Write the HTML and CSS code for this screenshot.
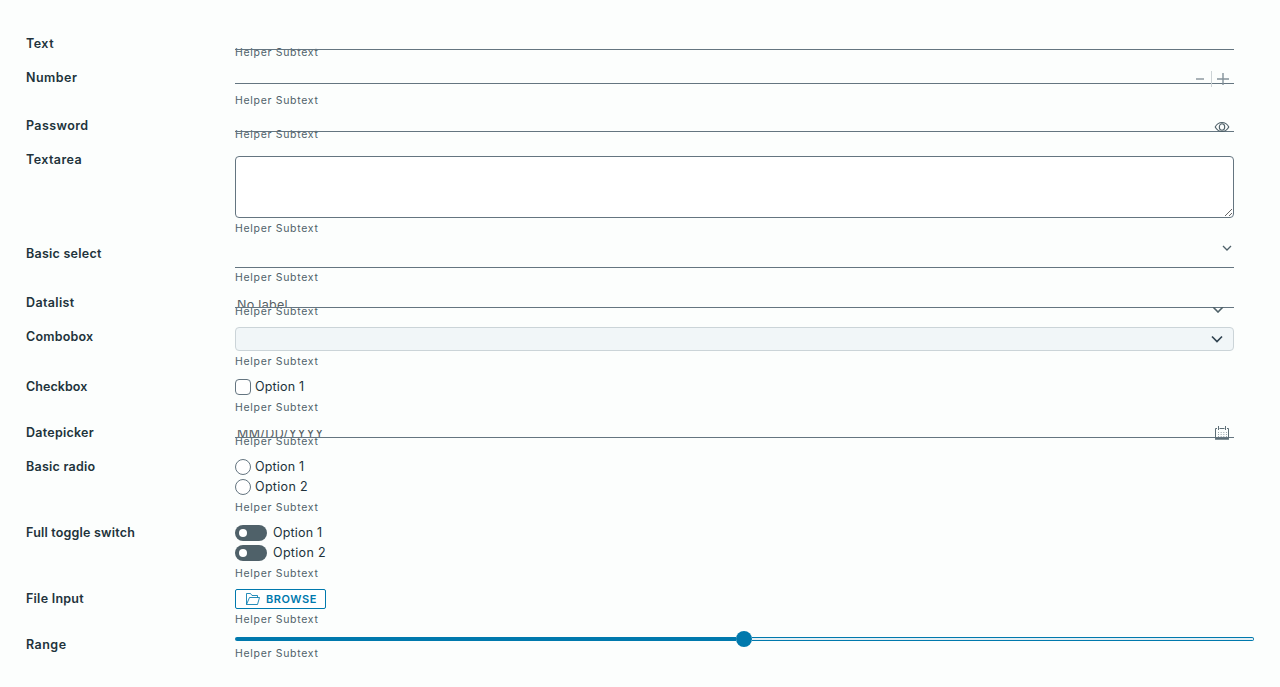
FILE: index.html
```html
<!DOCTYPE html>
<html lang="en">
<head>
<meta charset="utf-8">
<title>Form controls</title>
<link rel="stylesheet" href="styles.css">
</head>
<body>
<form class="form">
  <div class="row row-compact">
    <span class="label l-text">Text</span>
    <div class="field"><div class="line"></div><span class="helper">Helper Subtext</span></div>
  </div>
  <div class="row row-number">
    <span class="label l-number">Number</span>
    <div class="field">
      <div class="line line-number">
        <svg class="icon stepper" width="36" height="16" viewBox="0 0 36 16"><path d="M2 8h8" stroke="#9aa5aa" stroke-width="1.700"/><path d="M17.500 0v16" stroke="#ccd3d6"/><path d="M23 8h12M29 2v12" stroke="#84929a" stroke-width="1.400"/></svg>
      </div>
      <span class="helper">Helper Subtext</span>
    </div>
  </div>
  <div class="row row-compact">
    <span class="label l-password">Password</span>
    <div class="field">
      <div class="line">
        <svg class="icon eye" width="16" height="12" viewBox="0 0 16 12" fill="none" stroke="#4f6169" stroke-width="1.100"><path d="M1.200 6C2.700 3.200 5 1.500 8 1.500S13.300 3.200 14.800 6C13.300 8.800 11 10.500 8 10.500S2.700 8.800 1.200 6z"/><ellipse cx="8" cy="6" rx="2.700" ry="3.200"/></svg>
      </div>
      <span class="helper">Helper Subtext</span>
    </div>
  </div>
  <div class="row row-area">
    <span class="label l-textarea">Textarea</span>
    <div class="field"><textarea class="area"></textarea><span class="helper">Helper Subtext</span></div>
  </div>
  <div class="row row-select">
    <span class="label l-select">Basic select</span>
    <div class="field">
      <div class="line line-select">
        <svg class="icon select-chevron" width="10" height="8" viewBox="0 0 10 8" fill="none" stroke="#4f6169" stroke-width="1.300"><path d="M1 2l4 4 4-4"/></svg>
      </div>
      <span class="helper">Helper Subtext</span>
    </div>
  </div>
  <div class="row row-compact">
    <span class="label l-datalist">Datalist</span>
    <div class="field">
      <div class="line line-hint"><div class="clip"><span class="hint hint-label">No label</span></div>
        <svg class="icon list-chevron" width="12" height="6" viewBox="0 0 12 6" fill="none" stroke="#4f6169" stroke-width="1.600"><path d="M1 0L6 5 11 0"/></svg>
      </div>
      <span class="helper">Helper Subtext</span>
    </div>
  </div>
  <div class="row row-combo">
    <span class="label l-combo">Combobox</span>
    <div class="field">
      <div class="combo"><svg width="12" height="8" viewBox="0 0 12 8" fill="none" stroke="#314351" stroke-width="1.700"><path d="M1 1.500l5 5 5-5"/></svg></div>
      <span class="helper">Helper Subtext</span>
    </div>
  </div>
  <div class="row row-check">
    <span class="label l-check">Checkbox</span>
    <div class="field">
      <div class="choices"><label class="choice"><span class="box"></span><span class="option opt1">Option 1</span></label></div>
      <span class="helper">Helper Subtext</span>
    </div>
  </div>
  <div class="row row-compact">
    <span class="label l-date">Datepicker</span>
    <div class="field">
      <div class="line line-hint"><div class="clip"><span class="hint hint-date">MM/DD/YYYY</span></div>
        <svg class="icon calendar" width="16" height="14" viewBox="0 0 16 14" fill="none" stroke="#5d6e76"><path d="M3 2.500H1.500v10h13v-10H13M5.500 2.500h5"/><path d="M1 13h14" stroke-width="1.500"/><path d="M4.500 0v4M11.500 0v4"/><path d="M4 6.500h9M4 8.500h9M4 10.500h9" stroke="#9aa5aa" stroke-dasharray="1 1.660"/></svg>
      </div>
      <span class="helper">Helper Subtext</span>
    </div>
  </div>
  <div class="row row-options">
    <span class="label l-radio">Basic radio</span>
    <div class="field">
      <div class="choices">
        <label class="choice"><span class="box radio"></span><span class="option opt1">Option 1</span></label>
        <label class="choice"><span class="box radio"></span><span class="option opt2">Option 2</span></label>
      </div>
      <span class="helper">Helper Subtext</span>
    </div>
  </div>
  <div class="row row-options">
    <span class="label l-toggle">Full toggle switch</span>
    <div class="field">
      <div class="choices">
        <label class="choice toggle"><span class="switch"></span><span class="option opt1">Option 1</span></label>
        <label class="choice toggle"><span class="switch"></span><span class="option opt2">Option 2</span></label>
      </div>
      <span class="helper">Helper Subtext</span>
    </div>
  </div>
  <div class="row row-check">
    <span class="label l-file">File Input</span>
    <div class="field">
      <button class="browse" type="button"><svg width="16" height="14" viewBox="0 0 16 14" fill="none" stroke="#0079ad" stroke-width=".85"><path d="M1.500 12.500v-11h4l1.500 2h5.500v2M1.500 12.500l3-7h10l-2 7z"/></svg><span class="browse-text">BROWSE</span></button>
      <span class="helper">Helper Subtext</span>
    </div>
  </div>
  <div class="row row-compact">
    <span class="label l-range">Range</span>
    <div class="field">
      <div class="range"><span class="fill"></span><span class="thumb"></span><span class="rest"></span></div>
      <span class="helper">Helper Subtext</span>
    </div>
  </div>
</form>
</body>
</html>
```

FILE: styles.css
```css
* { box-sizing: border-box; }
body { margin: 0; background: #fcfefd; color: #21333b; font-family: Inter, "Open Sans", sans-serif; font-size: 12.5px; }
.form { display: flex; flex-direction: column; width: 1280px; padding: 33px 26px 0; }
.row { display: grid; grid-template-columns: 209px 999px; }
.row-compact { height: 34px; }
.row-number { height: 48px; }
.row-area { height: 94px; }
.row-select { height: 49px; }
.row-combo { height: 50px; }
.row-check { height: 46px; }
.row-options { height: 66px; }
.label { justify-self: start; font-weight: 600; line-height: 21px; letter-spacing: .25px; white-space: nowrap; }
.l-text, .l-number, .l-range { letter-spacing: .48px; }
.l-password, .l-textarea { letter-spacing: .41px; }
.l-datalist { letter-spacing: .35px; }
.l-combo, .l-toggle { letter-spacing: .2px; }
.l-check { letter-spacing: .05px; }
.field { display: flex; flex-direction: column; align-items: flex-start; }
.helper { font-size: 10.5px; line-height: 18px; letter-spacing: .69px; color: #4f6169; white-space: nowrap; }
.line { position: relative; flex: none; width: 100%; height: 17px; margin-bottom: -6px; border-bottom: 1px solid #647580; }
.line-number { margin-bottom: 8px; }
.line-select { height: 25px; margin-bottom: 1px; }
.line-hint { height: 16px; margin-bottom: -5px; padding-top: 8px; }
.icon { position: absolute; }
.stepper { right: 4px; top: 4px; }
.eye { right: 4px; top: 6px; }
.select-chevron { right: 2px; top: 1px; }
.list-chevron { right: 10px; top: 15px; }
.calendar { right: 4px; top: 4px; }
.clip { height: 7px; overflow: hidden; padding-left: 2px; }
.hint { display: block; width: max-content; line-height: 16px; margin-top: -3px; color: #565f64; letter-spacing: .3px; }
.hint-date { margin-top: -4px; letter-spacing: .38px; }
.area { display: block; flex: none; width: 100%; height: 62px; margin: 7px 0 2px; border: 1px solid #647580; border-radius: 4px; background: #fff; resize: vertical; outline: 0; }
.combo { display: flex; flex: none; align-items: center; justify-content: flex-end; width: 100%; height: 24px; margin: 1px 0 2px; padding-right: 10px; border: 1px solid #cbd4d8; border-radius: 4px; background: #f1f6f8; }
.choices { display: flex; flex-direction: column; gap: 4px; padding: 3px 0 4px; }
.choice { display: flex; align-items: center; gap: 4px; height: 16px; }
.toggle { gap: 6px; }
.option { line-height: 16px; letter-spacing: .18px; white-space: nowrap; }
.opt2 { letter-spacing: .32px; }
.box { width: 16px; height: 16px; border: 1px solid #647580; border-radius: 4px; background: #fff; }
.radio { border-radius: 50%; }
.switch { display: flex; align-items: center; width: 32px; height: 16px; padding-left: 4px; border-radius: 8px; background: #4f6169; }
.switch::before { content: ""; width: 8px; height: 8px; border-radius: 50%; background: #fff; }
.browse { display: flex; flex: none; align-items: center; gap: 5px; width: 91px; height: 20px; margin: 1px 0 2px; padding: 0 0 0 9px; border: 1px solid #0079ad; border-radius: 2px; background: #fff; color: #0079ad; font: 600 11px/18px Inter, sans-serif; letter-spacing: .55px; }
.range { display: flex; flex: none; align-items: center; width: 1019px; height: 16px; margin: -3px 0 -2px; }
.fill { width: 501px; height: 4px; border-radius: 2px 0 0 2px; background: #0079ad; }
.thumb { width: 16px; height: 16px; border-radius: 50%; background: #0079ad; }
.rest { flex: 1; height: 4px; border: 1px solid #0079ad; border-left: 0; border-radius: 0 2px 2px 0; background: #e3eef3; }
```
